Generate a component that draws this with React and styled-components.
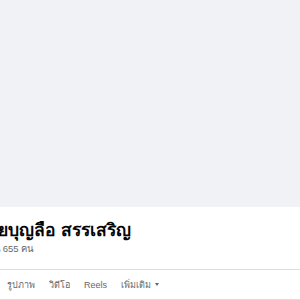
import React from 'react';
import styled, { createGlobalStyle } from 'styled-components';

const Global = createGlobalStyle`
  html, body {
    margin: 0;
    padding: 0;
    background: #ffffff;
    font-family: 'Liberation Sans', 'Noto Sans', sans-serif;
  }
`;

const Page = styled.div`
  width: 300px;
  height: 300px;
  overflow: hidden;
  display: flex;
  flex-direction: column;
`;

const Cover = styled.div`
  height: 207px;
  background: #f0f2f5;
  flex-shrink: 0;
`;

const Header = styled.div`
  display: flex;
  flex-direction: column;
  padding: 11px 0 0 0;
`;

const Name = styled.h1`
  margin: 0 0 0 -14px;
  font-size: 17.5px;
  font-weight: 700;
  line-height: 24px;
  color: #050505;
  white-space: nowrap;
`;

const Friends = styled.div`
  margin-left: -21px;
  font-size: 9.5px;
  line-height: 13px;
  color: #65676b;
  white-space: nowrap;
`;

const Tabs = styled.div`
  margin-top: 14px;
  border-top: 1px solid #dadde1;
  border-bottom: 1px solid #dadde1;
  height: 31px;
  display: flex;
  align-items: center;
  gap: 14px;
  padding-left: 7px;
`;

const Tab = styled.span`
  font-size: 9px;
  font-weight: 500;
  color: #65676b;
  display: flex;
  align-items: center;
  gap: 4px;
`;

const Caret = styled.span`
  width: 0;
  height: 0;
  border-left: 2.5px solid transparent;
  border-right: 2.5px solid transparent;
  border-top: 3px solid #65676b;
`;

export default function App() {
  return (
    <Page>
      <Global />
      <Cover />
      <Header>
        <Name>ชัยบุญลือ สรรเสริญ</Name>
        <Friends>เพื่อน 655 คน</Friends>
      </Header>
      <Tabs>
        <Tab>รูปภาพ</Tab>
        <Tab>วิดีโอ</Tab>
        <Tab>Reels</Tab>
        <Tab>
          เพิ่มเติม
          <Caret />
        </Tab>
      </Tabs>
    </Page>
  );
}
